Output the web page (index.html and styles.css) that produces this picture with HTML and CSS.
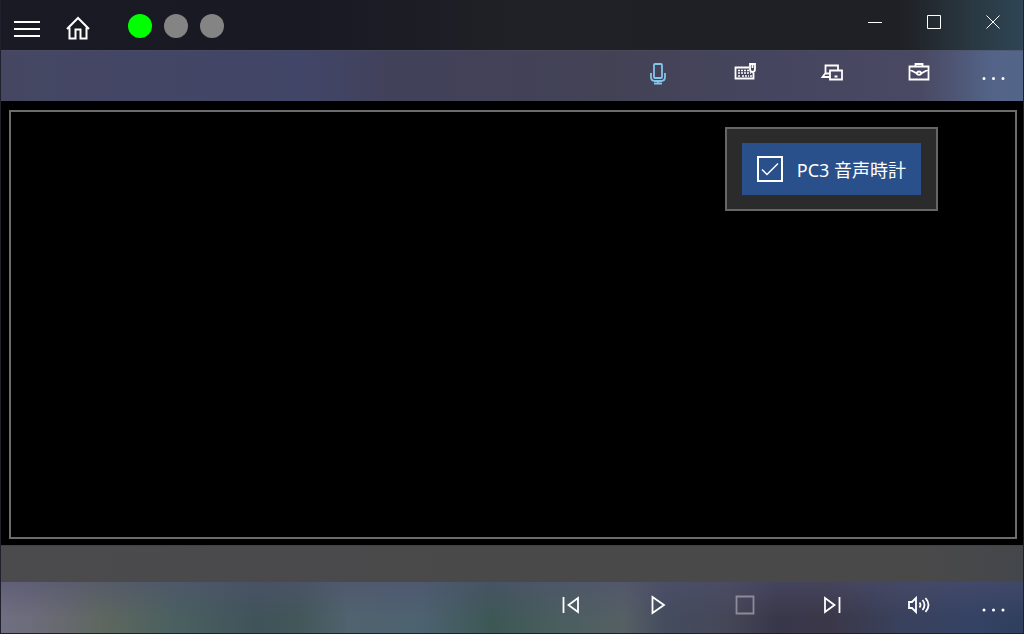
FILE: index.html
```html
<!DOCTYPE html>
<html lang="ja">
<head>
    <meta charset="utf-8">
    <meta name="viewport" content="width=device-width, initial-scale=1">
    <title>PC3 音声時計</title>
    <link rel="stylesheet" href="styles.css">
</head>
<body>
    <header class="title-bar">
        <button class="nav-button" aria-label="Menu">
            <svg width="26" height="26" viewBox="0 0 26 26"><path d="M0 6h26M0 13h26M0 20h26"/></svg>
        </button>
        <button class="nav-button" aria-label="Home">
            <svg width="26" height="26" viewBox="0 0 26 26"><path d="M2 13 13 2l11 11M4.500 11.500v11h6v-9h5v9h6v-11"/></svg>
        </button>
        <div class="lights">
            <span class="light on"></span>
            <span class="light"></span>
            <span class="light"></span>
        </div>
        <div class="window-buttons">
            <button class="window-button" aria-label="Minimize">
                <svg width="14" height="14" viewBox="0 0 14 14"><path d="M0 7.500h14"/></svg>
            </button>
            <button class="window-button" aria-label="Maximize">
                <svg width="14" height="14" viewBox="0 0 14 14"><path d="M.5.5h13v13H.5z"/></svg>
            </button>
            <button class="window-button" aria-label="Close">
                <svg width="14" height="14" viewBox="0 0 14 14"><path d="M.5.5l13 13M13.500.5l-13 13"/></svg>
            </button>
        </div>
    </header>

    <nav class="tool-bar">
        <button class="tool mic" aria-label="Microphone">
            <svg width="24" height="24" viewBox="0 0 24 24"><rect x="8" y="3" width="8" height="14" rx="1"/><path d="M5 12v4q0 4 4 4h6q4 0 4-4v-4M12 20v2.500M8 22.500h8"/></svg>
        </button>
        <button class="tool" aria-label="Keyboard and mouse">
            <svg width="24" height="24" viewBox="0 0 24 24"><path d="M16 6.500H2.500v11h18V12"/><path class="keys" d="M5 9.500h11M5 12h13M5 15h2M9 15h7M17 15h2"/><path d="M17 3h5v5q0 3-2.500 3T17 8z"/><path d="M19.500 3v4"/></svg>
        </button>
        <button class="tool" aria-label="Devices">
            <svg width="24" height="24" viewBox="0 0 24 24"><path d="M18 9V4.500H5.500V12l-3 4H10M5 12.500h5M10 9.500h12v9H10zM14.500 15.500h3"/></svg>
        </button>
        <button class="tool" aria-label="Toolbox">
            <svg width="24" height="24" viewBox="0 0 24 24"><path d="M2.500 5.500h19v13h-19zM8.500 5.500V3h7v2.500M2.500 8.500l7.500 4M21.500 8.500l-7.500 4M10 11.500q2-2 4 0V13q-2 1.500-4 0z"/></svg>
        </button>
        <button class="tool more" aria-label="More tools">
            <svg width="24" height="24" viewBox="0 0 24 24"><path class="dots" d="M3 17.500h0M12.500 17.500h0M22 17.500h0"/></svg>
        </button>
    </nav>

    <main class="stage">
        <div class="canvas">
            <div class="panel">
                <label class="option" for="voiceClock">
                    <span class="tick-box">
                        <input type="checkbox" id="voiceClock" checked>
                        <svg class="tick" width="26" height="26" viewBox="0 0 26 26"><path d="M5 13.500l5 5L21 7.500"/></svg>
                    </span>
                    <span>PC3 音声時計</span>
                </label>
            </div>
        </div>
    </main>

    <div class="status-bar"></div>

    <footer class="tool-bar player">
        <button class="tool" aria-label="Previous">
            <svg width="24" height="24" viewBox="0 0 24 24"><path d="M4.500 4v16M19 5v14L9.500 12z"/></svg>
        </button>
        <button class="tool" aria-label="Play">
            <svg width="24" height="24" viewBox="0 0 24 24"><path d="M6.500 4v16L18 12z"/></svg>
        </button>
        <button class="tool" aria-label="Stop" disabled>
            <svg width="24" height="24" viewBox="0 0 24 24"><path d="M3.500 3.500h17v17h-17z"/></svg>
        </button>
        <button class="tool" aria-label="Next">
            <svg width="24" height="24" viewBox="0 0 24 24"><path d="M19.500 4v16M5 5v14l9.500-7z"/></svg>
        </button>
        <button class="tool" aria-label="Volume">
            <svg width="24" height="24" viewBox="0 0 24 24"><path d="M2 9h3l4-4v14l-4-4H2zM12.500 9.500q2 2.500 0 5M15.500 7q4 5 0 10M18.500 5q6 7 0 14"/></svg>
        </button>
        <button class="tool more" aria-label="More controls">
            <svg width="24" height="24" viewBox="0 0 24 24"><path class="dots" d="M3 17h0M12.500 17h0M22 17h0"/></svg>
        </button>
    </footer>
</body>
</html>
```
FILE: styles.css
```css
* {
    box-sizing: border-box;
}
body {
    margin: 0;
    min-height: 100vh;
    display: flex;
    flex-direction: column;
    background: #000;
    border: 1px solid #20212c;
    border-top: none;
    color: #fff;
    font-family: "Noto Sans", "Noto Sans CJK JP", sans-serif;
    font-size: 18px;
}
button {
    display: flex;
    align-items: center;
    justify-content: center;
    padding: 0;
    border: none;
    background: none;
    color: inherit;
}
svg {
    display: block;
    fill: none;
    stroke: currentColor;
    stroke-width: 2;
}

/* title bar */
.title-bar {
    display: flex;
    height: 50px;
    background: linear-gradient(90deg, #191a24 0%, #181923 30%, #202126 50%, #1f2025 88%, #293841 95%, #2f4555 100%);
}
.nav-button {
    width: 51px;
    height: 57px;
}
.lights {
    display: flex;
    gap: 12px;
    padding: 14px 25px;
}
.light {
    width: 24px;
    height: 24px;
    border-radius: 50%;
    background: #848484;
}
.light.on {
    background: #00ff00;
}
.window-buttons {
    display: flex;
    margin-left: auto;
    padding-right: 1px;
}
.window-button {
    width: 59px;
    height: 43px;
}
.window-button svg {
    stroke-width: 1;
}

/* tool bars */
.tool-bar {
    display: flex;
    justify-content: flex-end;
    height: 51px;
    border-top: 1px solid #50506080;
    background: linear-gradient(90deg, #454762 0%, #414567 30%, #41415a 38%, #434255 60%, #45455f 75%, #4a4963 90%, #536488 97%, #526589 100%);
}
.tool {
    width: 87px;
    height: 44px;
}
.tool svg {
    stroke-width: 1.800;
}
.tool.more {
    width: 61px;
}
.tool:disabled {
    color: #8c8c98;
}
.mic {
    color: #86c5ea;
}
.tool .keys {
    stroke-width: 1.500;
    stroke-dasharray: 2 1;
}
.tool .dots {
    stroke-width: 3;
    stroke-linecap: round;
}

/* content */
.stage {
    flex: 1;
    display: flex;
    padding: 9px 6px 6px 8px;
}
.canvas {
    flex: 1;
    display: flex;
    justify-content: flex-end;
    align-items: flex-start;
    padding: 15px 77px 15px 15px;
    border: 2px solid #6c6c6c;
}
.panel {
    padding: 14px 15px;
    border: 2px solid #666;
    background: #2b2b2b;
}
.option {
    display: flex;
    align-items: center;
    gap: 14px;
    height: 52px;
    padding: 0 15px;
    background: #2a508b;
    white-space: nowrap;
}
.tick-box {
    display: grid;
}
.tick-box input,
.tick-box svg {
    grid-area: 1 / 1;
}
.tick-box input {
    appearance: none;
    width: 26px;
    height: 26px;
    margin: 0;
    border: 2px solid #fff;
}
.tick {
    stroke-width: 1.500;
    visibility: hidden;
    pointer-events: none;
}
input:checked + .tick {
    visibility: visible;
}

/* bottom */
.status-bar {
    height: 37px;
    border-top: 1px solid #414145;
    background: linear-gradient(90deg, #4b4a4d, #49494a 50%, #4a494a 90%, #43474b);
}
.player {
    border-top: none;
    background:
        linear-gradient(180deg, #50507080, transparent 70%),
        linear-gradient(90deg, #706f82 0%, #6b6b77 4%, #5e675f 10%, #4a6060 17%, #40535a 25%, #435659 29%, #50636e 34%, #4d6270 41%, #3d5755 48%, #4b5e60 55%, #555f64 61%, #444c5e 65%, #454757 71%, #38374a 76%, #3b3748 81%, #39415c 88%, #344264 95%, #313f5e 100%);
}
.player .tool {
    height: 46px;
}
```
